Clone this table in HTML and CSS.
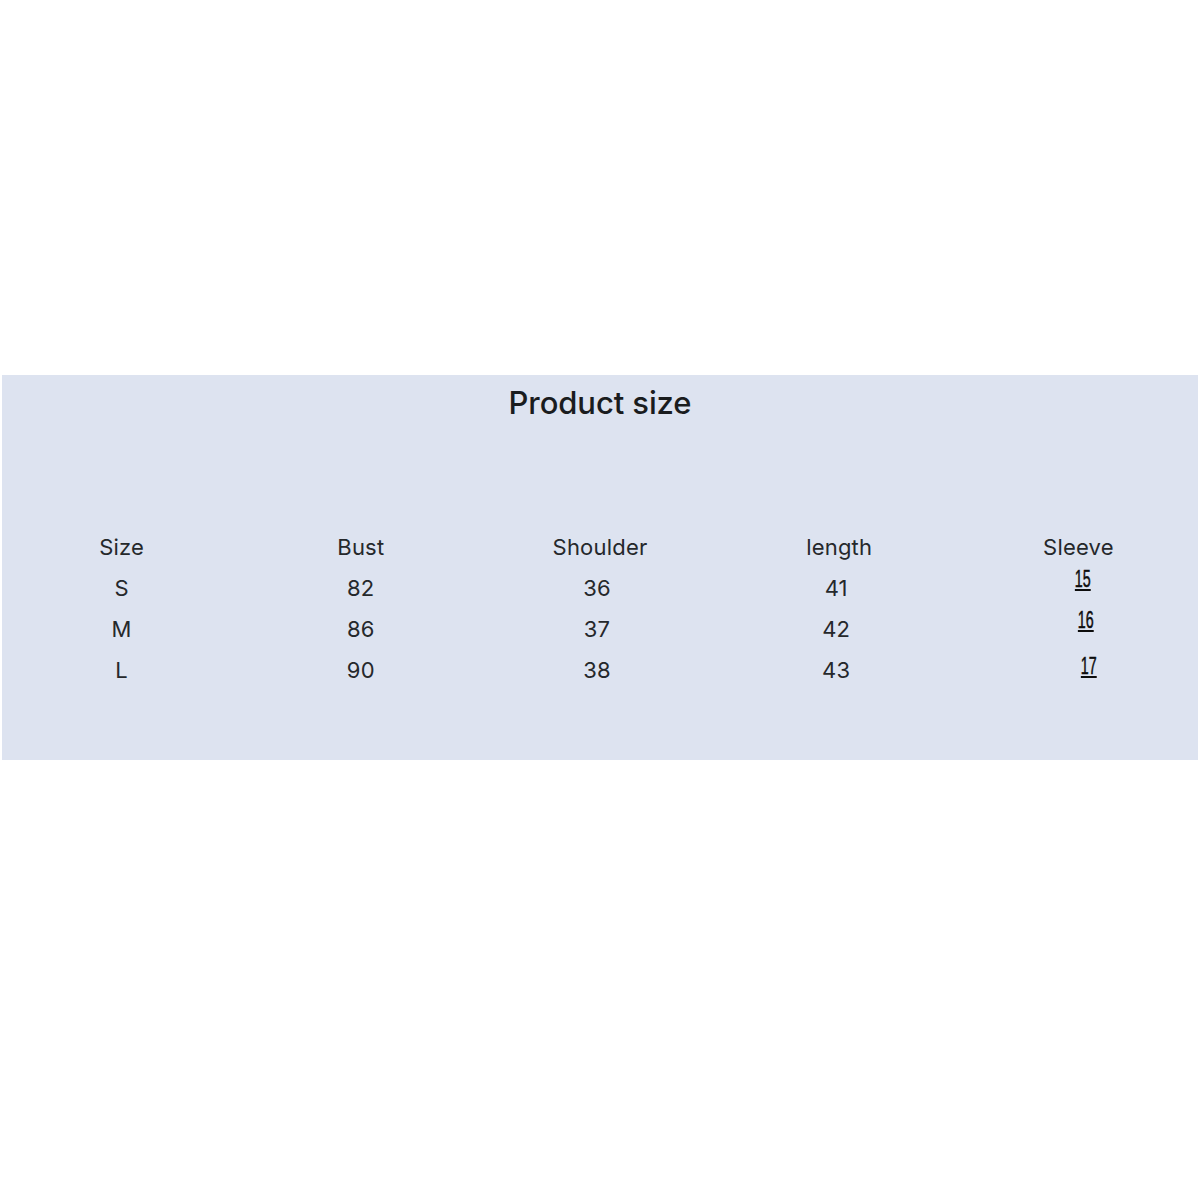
FILE: index.html
```html
<!DOCTYPE html>
<html>
<head>
<meta charset="utf-8">
<link rel="stylesheet" href="styles.css">
</head>
<body>
<div class="panel">
  <h1 class="title">Product size</h1>
  <div class="table">
    <div class="row head">
      <div class="cell">Size</div>
      <div class="cell">Bust</div>
      <div class="cell">Shoulder</div>
      <div class="cell">length</div>
      <div class="cell">Sleeve</div>
    </div>
    <div class="row">
      <div class="cell">S</div>
      <div class="cell">82</div>
      <div class="cell shift">36</div>
      <div class="cell shift">41</div>
      <div class="cell"><span class="sl s1">15</span></div>
    </div>
    <div class="row">
      <div class="cell">M</div>
      <div class="cell">86</div>
      <div class="cell shift">37</div>
      <div class="cell shift">42</div>
      <div class="cell"><span class="sl s2">16</span></div>
    </div>
    <div class="row">
      <div class="cell">L</div>
      <div class="cell">90</div>
      <div class="cell shift">38</div>
      <div class="cell shift">43</div>
      <div class="cell"><span class="sl s3">17</span></div>
    </div>
  </div>
</div>
</body>
</html>
```
FILE: styles.css
```css
html, body {
  margin: 0;
  padding: 0;
  background: #ffffff;
}
body {
  font-family: Inter, "Liberation Sans", sans-serif;
  color: #222426;
}
.panel {
  margin: 375px 2px 0 2px;
  height: 385px;
  background: #dde3f0;
  box-sizing: border-box;
  padding-top: 8px;
}
.title {
  margin: 0;
  text-align: center;
  font-size: 31px;
  font-weight: 500;
  line-height: 40px;
  color: #1a1c1e;
  letter-spacing: -0.1px;
}
.table {
  margin-top: 104px;
}
.row {
  display: grid;
  grid-template-columns: repeat(5, 1fr);
  height: 41px;
  align-items: center;
}
.head {
  height: 40px;
}
.cell {
  text-align: center;
  font-size: 22px;
  line-height: 28px;
  font-weight: 400;
  color: #25282b;
  letter-spacing: 0.2px;
}
.shift {
  padding-right: 6px;
}
.sl {
  display: inline-block;
  font-family: "Liberation Sans", Arial, sans-serif;
  font-weight: 400;
  font-size: 23px;
  line-height: 22px;
  color: #0d0d0d;
  letter-spacing: 0;
  text-decoration: underline;
  text-decoration-thickness: 2px;
  text-underline-offset: 2px;
  transform: scaleX(0.62);
  -webkit-text-stroke: 0.5px #0d0d0d;
  position: relative;
}
.s1 { left: 4px; top: -9px; }
.s2 { left: 7px; top: -9px; }
.s3 { left: 10px; top: -4px; }
```
